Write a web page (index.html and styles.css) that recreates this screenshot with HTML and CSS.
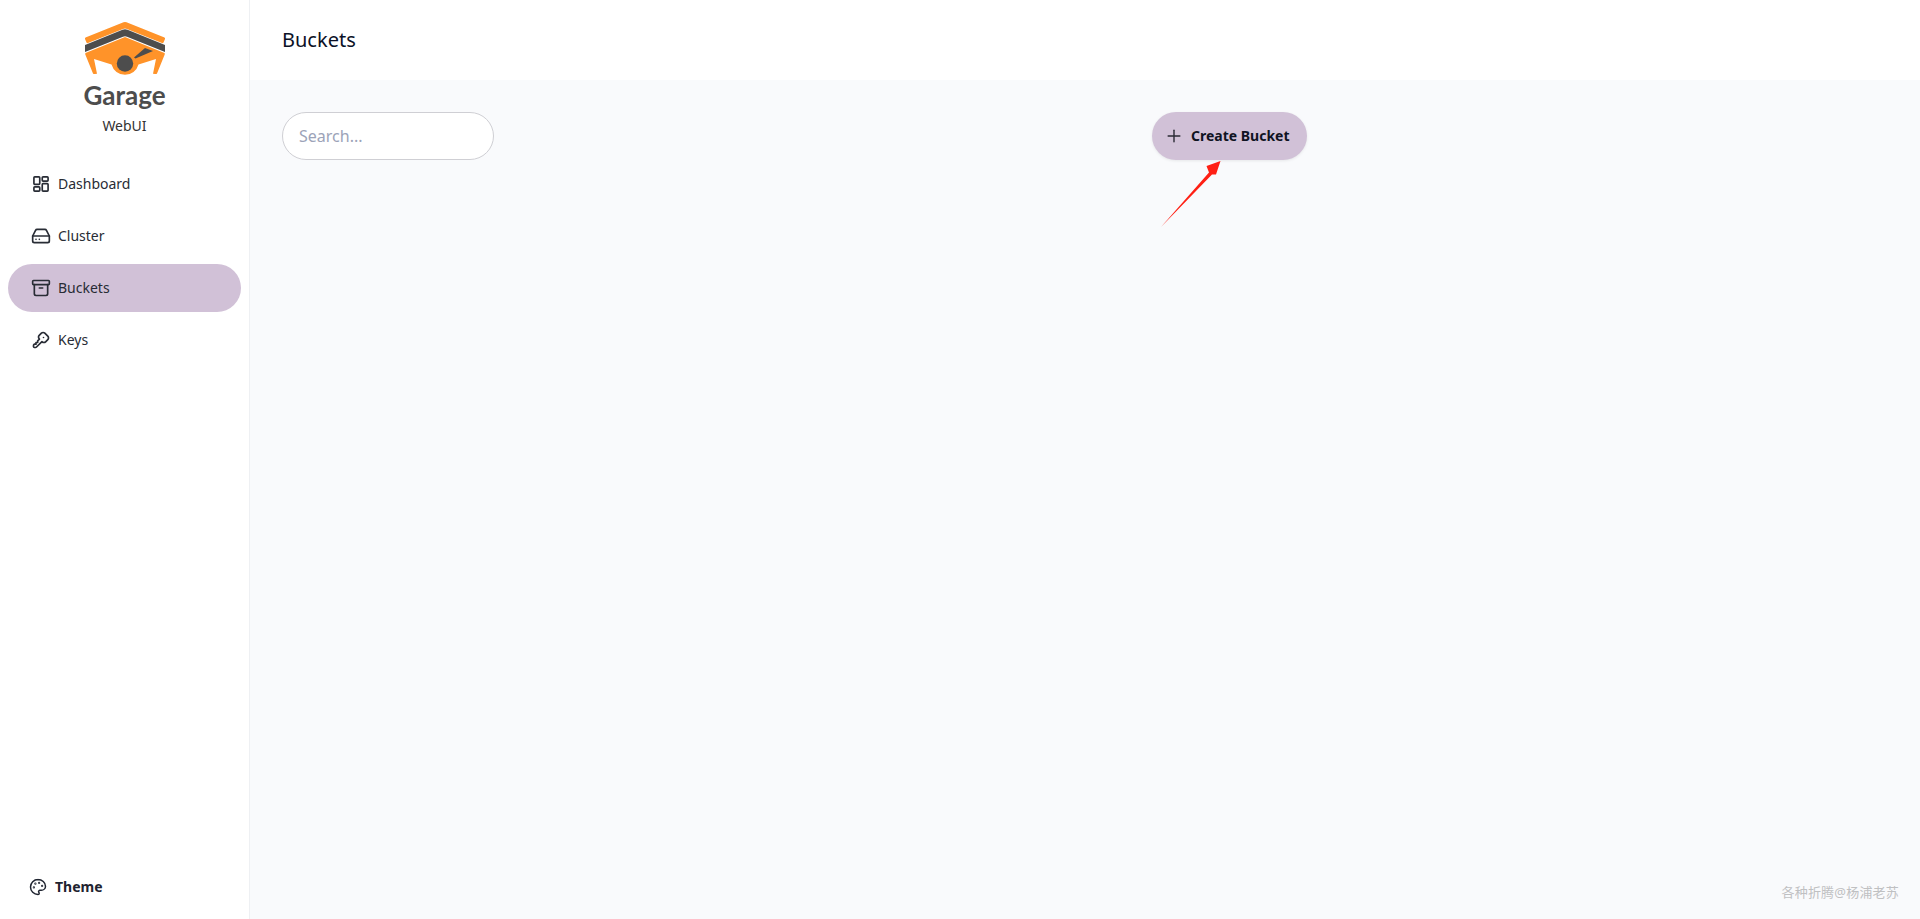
FILE: index.html
```html
<!DOCTYPE html>
<html lang="en">
<head>
    <meta charset="UTF-8">
    <meta name="viewport" content="width=device-width, initial-scale=1.0">
    <title>Garage WebUI - Buckets</title>
    <link rel="stylesheet" href="styles.css">
</head>
<body>
    <!-- Sidebar -->
    <aside class="sidebar">
        <div class="brand">
            <svg class="brand-logo" viewBox="0 0 80 56" width="80" height="56">
                <path class="logo-orange" d="M38.5 1.2 Q40 .6 41.5 1.2 L79.5 16.5 Q80.3 17 80 18 L78.5 21.5 Q78 22.5 77 22 L42 8 Q40 7.2 38 8 L3 22 Q2 22.5 1.5 21.5 L0 18 Q-.3 17 .5 16.5Z"/>
                <path class="logo-dark" d="M0 24 L37.5 8.8 Q40 7.8 42.5 8.8 L80 24 V31 L42 15.7 Q40 15 38 15.7 L0 31Z"/>
                <path class="logo-orange" d="M40 16 L79.5 32 Q80 32.5 79.7 33.5 L72 52.5 Q71.5 53.2 70 53 L68 52.7 L71 38 L53.5 43.5 A14 14 0 0 1 26.5 43.5 L9 38 L12 52.7 L10 53 Q8.5 53.2 8 52.5 L.3 33.5 Q0 32.5 .5 32Z"/>
                <circle class="logo-dark" cx="40" cy="42.5" r="8.2"/>
                <path class="logo-dark" d="M49 36.5 L60 27 L68 30 L50.5 37.5Z"/>
            </svg>
            <div class="brand-name">Garage</div>
            <div class="brand-sub">WebUI</div>
        </div>

        <nav class="menu">
            <a class="menu-item" href="#">
                <svg class="icon" viewBox="0 0 24 24"><rect x="3.5" y="3.5" width="7" height="9" rx="1"/><rect x="3.5" y="15.5" width="7" height="5" rx="1"/><rect x="13.5" y="11.5" width="7" height="9" rx="1"/><rect x="13.5" y="3.5" width="7" height="5" rx="1"/></svg>
                <span>Dashboard</span>
            </a>
            <a class="menu-item" href="#">
                <svg class="icon" viewBox="0 0 24 24"><path d="M22 12H2"/><path d="M5.45 5.11 2 12v6a2 2 0 0 0 2 2h16a2 2 0 0 0 2-2v-6l-3.45-6.89A2 2 0 0 0 16.76 4H7.24a2 2 0 0 0-1.79 1.11z"/><path d="M6 16h.01"/><path d="M10 16h.01"/></svg>
                <span>Cluster</span>
            </a>
            <a class="menu-item active" href="#">
                <svg class="icon" viewBox="0 0 24 24"><rect x="2" y="3" width="20" height="5" rx="1"/><path d="M4 8v11a2 2 0 0 0 2 2h12a2 2 0 0 0 2-2V8"/><path d="M10 12h4"/></svg>
                <span>Buckets</span>
            </a>
            <a class="menu-item" href="#">
                <svg class="icon" viewBox="0 0 24 24"><path d="M16.555 3.843l3.602 3.602a2.877 2.877 0 0 1 0 4.069l-2.643 2.643a2.877 2.877 0 0 1 -4.069 0l-.301 -.301l-6.558 6.558a2 2 0 0 1 -1.239 .578l-.175 .008h-1.172a1 1 0 0 1 -.993 -.883l-.007 -.117v-1.172a2 2 0 0 1 .467 -1.284l.119 -.13l.414 -.414h2v-2h2v-2l2.144 -2.144l-.301 -.301a2.877 2.877 0 0 1 0 -4.069l2.643 -2.643a2.877 2.877 0 0 1 4.069 0z"/><path d="M15 9h.01"/></svg>
                <span>Keys</span>
            </a>
        </nav>

        <div class="theme-btn">
            <svg class="icon" viewBox="0 0 24 24"><circle cx="13.5" cy="6.5" r=".5"/><circle cx="17.5" cy="10.5" r=".5"/><circle cx="8.5" cy="7.5" r=".5"/><circle cx="6.5" cy="12.5" r=".5"/><path d="M12 2C6.5 2 2 6.5 2 12s4.5 10 10 10c.926 0 1.648-.746 1.648-1.688 0-.437-.18-.835-.437-1.125-.29-.289-.438-.652-.438-1.125a1.64 1.64 0 0 1 1.668-1.668h1.996c3.051 0 5.555-2.503 5.555-5.554C21.965 6.012 17.461 2 11.999 2z"/></svg>
            Theme
        </div>
    </aside>

    <!-- Main area -->
    <div class="main">
        <header class="topbar">
            <h1>Buckets</h1>
        </header>
        <section class="content">
            <div class="toolbar">
                <div class="search-col">
                    <input class="search" type="text" placeholder="Search...">
                </div>
                <button class="btn">
                    <svg class="icon" viewBox="0 0 24 24"><path d="M5 12h14"/><path d="M12 5v14"/></svg>
                    <span>Create Bucket</span>
                </button>
            </div>
        </section>
        <div class="watermark">各种折腾@杨浦老苏</div>
    </div>

    <!-- Red annotation arrow drawn over the page -->
    <svg class="arrow" viewBox="0 0 62 68" width="62" height="68">
        <path d="M0 67 L48 12.5 L45.5 6 L59.5 1 L55 14.5 L51 14.5Z"/>
    </svg>
</body>
</html>
```

FILE: styles.css
```css
* {
    margin: 0;
    padding: 0;
    box-sizing: border-box;
}
body {
    font-family: 'Noto Sans', 'Noto Sans CJK SC', sans-serif;
    background: #f9fafc;
    color: #1f2430;
    height: 100vh;
    display: flex;
    overflow: hidden;
}
.icon {
    width: 20px;
    height: 20px;
    flex: none;
    fill: none;
    stroke: currentColor;
    stroke-width: 2;
    stroke-linecap: round;
    stroke-linejoin: round;
}
.sidebar {
    width: 250px;
    flex: none;
    display: flex;
    flex-direction: column;
    background: #fff;
    border-right: 1px solid #eef0f3;
}
.brand {
    display: flex;
    flex-direction: column;
    align-items: center;
    padding-top: 21px;
}
.brand-logo {
    display: block;
    overflow: visible;
}
.logo-orange {
    fill: #ff9329;
}
.logo-dark {
    fill: #4d4d4d;
}
.brand-name {
    font-family: 'Lato', sans-serif;
    font-size: 26px;
    line-height: 36px;
    font-weight: 700;
    color: #4d4d4d;
}
.brand-sub {
    font-size: 14px;
    line-height: 20px;
    color: #333;
    margin-top: 3px;
}
.menu {
    display: flex;
    flex-direction: column;
    gap: 4px;
    padding: 24px 8px 0;
}
.menu-item {
    display: flex;
    align-items: center;
    gap: 7px;
    height: 48px;
    padding-left: 23px;
    border-radius: 24px;
    font-size: 14px;
    color: #282c35;
    text-decoration: none;
}
.menu-item span {
    margin-top: -2px;
}
.menu-item.active {
    background: #d1c1d7;
}
.theme-btn {
    margin-top: auto;
    display: flex;
    align-items: center;
    gap: 8px;
    padding: 0 0 23px 29px;
    font-size: 14px;
    font-weight: 700;
    color: #1f2430;
}
.theme-btn .icon {
    width: 18px;
    height: 18px;
}
.main {
    flex: 1;
    display: flex;
    flex-direction: column;
    min-width: 0;
}
.topbar {
    height: 80px;
    flex: none;
    display: flex;
    align-items: center;
    padding: 0 32px 2px;
    background: #fff;
}
.topbar h1 {
    font-size: 20px;
    font-weight: 400;
    color: #0b1126;
}
.content {
    flex: 1;
    padding: 32px;
}
.toolbar {
    display: flex;
    align-items: center;
}
.search-col {
    width: 870px;
    flex: none;
}
.search {
    display: block;
    width: 212px;
    height: 48px;
    padding: 0 16px;
    border: 1px solid #cfcfd4;
    border-radius: 24px;
    background: #fff;
    font-family: inherit;
    font-size: 16px;
    color: #1f2430;
}
.search::placeholder {
    color: #9ca3b8;
    opacity: 1;
}
.btn {
    display: flex;
    align-items: center;
    gap: 7px;
    height: 48px;
    padding: 0 17px 0 12px;
    border: none;
    border-radius: 24px;
    background: #d1c1d7;
    box-shadow: 0 1px 3px rgba(0, 0, 0, 0.08);
    font-family: inherit;
    font-size: 14px;
    font-weight: 700;
    color: #0f1322;
}
.btn span {
    margin-top: -2px;
}
.btn .icon {
    stroke-width: 1.7;
    color: #2a2a35;
}
.watermark {
    position: absolute;
    right: 21px;
    bottom: 18px;
    font-size: 13px;
    letter-spacing: .2px;
    line-height: 18px;
    color: #bfc0c2;
}
.arrow {
    position: absolute;
    left: 1161px;
    top: 160px;
}
.arrow path {
    fill: #ff1f14;
}
```
